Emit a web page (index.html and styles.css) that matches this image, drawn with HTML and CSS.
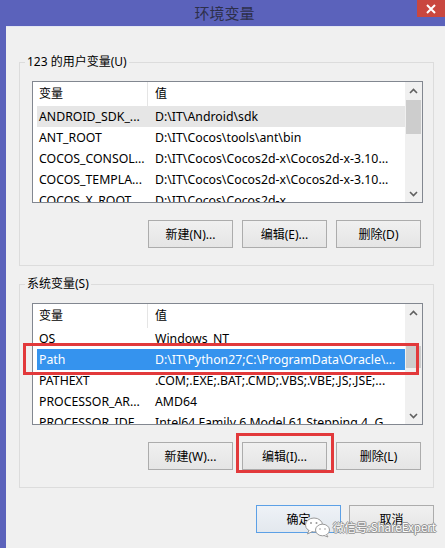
FILE: index.html
```html
<!DOCTYPE html>
<html lang="zh-CN">
<head>
<meta charset="utf-8">
<title>环境变量</title>
<link rel="stylesheet" href="styles.css">
</head>
<body>
<div class="page">
  <div class="titlebar">
    <span class="title">环境变量</span>
    <div class="close">
      <svg width="12" height="12" viewBox="0 0 12 12"><path d="M2 2 L10 10 M10 2 L2 10" stroke="#fff" stroke-width="2" fill="none"/></svg>
    </div>
  </div>
  <div class="frame">
    <div class="client">
      <fieldset class="group group-user">
        <legend>123 的用户变量(U)</legend>
        <div class="list">
          <div class="list-main">
            <div class="row header"><span class="c1">变量</span><span class="c2">值</span></div>
            <div class="row inactive"><span class="c1">ANDROID_SDK_...</span><span class="c2">D:\IT\Android\sdk</span></div>
            <div class="row"><span class="c1">ANT_ROOT</span><span class="c2">D:\IT\Cocos\tools\ant\bin</span></div>
            <div class="row"><span class="c1">COCOS_CONSOL...</span><span class="c2">D:\IT\Cocos\Cocos2d-x\Cocos2d-x-3.10...</span></div>
            <div class="row"><span class="c1">COCOS_TEMPLA...</span><span class="c2">D:\IT\Cocos\Cocos2d-x\Cocos2d-x-3.10...</span></div>
            <div class="row"><span class="c1">COCOS_X_ROOT</span><span class="c2">D:\IT\Cocos\Cocos2d-x</span></div>
          </div>
          <div class="scrollbar">
            <div class="arrow"><svg width="9" height="6" viewBox="0 0 9 6"><path d="M1 5 L4.5 1.5 L8 5" stroke="#606060" stroke-width="1.6" fill="none"/></svg></div>
            <div class="track"><div class="thumb thumb-user"></div></div>
            <div class="arrow"><svg width="9" height="6" viewBox="0 0 9 6"><path d="M1 1 L4.5 4.5 L8 1" stroke="#606060" stroke-width="1.6" fill="none"/></svg></div>
          </div>
        </div>
        <div class="buttons">
          <div class="btn">新建(N)...</div>
          <div class="btn">编辑(E)...</div>
          <div class="btn">删除(D)</div>
        </div>
      </fieldset>

      <fieldset class="group group-sys">
        <legend>系统变量(S)</legend>
        <div class="list">
          <div class="list-main">
            <div class="row header"><span class="c1">变量</span><span class="c2">值</span></div>
            <div class="row"><span class="c1">OS</span><span class="c2">Windows_NT</span></div>
            <div class="row selected"><span class="c1">Path</span><span class="c2">D:\IT\Python27;C:\ProgramData\Oracle\...</span></div>
            <div class="row"><span class="c1">PATHEXT</span><span class="c2">.COM;.EXE;.BAT;.CMD;.VBS;.VBE;.JS;.JSE;...</span></div>
            <div class="row"><span class="c1">PROCESSOR_AR...</span><span class="c2">AMD64</span></div>
            <div class="row"><span class="c1">PROCESSOR_IDE...</span><span class="c2">Intel64 Family 6 Model 61 Stepping 4, G...</span></div>
          </div>
          <div class="scrollbar">
            <div class="arrow"><svg width="9" height="6" viewBox="0 0 9 6"><path d="M1 5 L4.5 1.5 L8 5" stroke="#606060" stroke-width="1.6" fill="none"/></svg></div>
            <div class="track"><div class="thumb thumb-sys"></div></div>
            <div class="arrow"><svg width="9" height="6" viewBox="0 0 9 6"><path d="M1 1 L4.5 4.5 L8 1" stroke="#606060" stroke-width="1.6" fill="none"/></svg></div>
          </div>
        </div>
        <div class="buttons">
          <div class="btn">新建(W)...</div>
          <div class="btn">编辑(I)...</div>
          <div class="btn">删除(L)</div>
        </div>
      </fieldset>

      <div class="dialog-buttons">
        <div class="btn default">确定</div>
        <div class="btn">取消</div>
      </div>
    </div>
  </div>

  <div class="mark mark-path"></div>
  <div class="mark mark-edit"></div>

  <div class="watermark">
    <svg class="wx" width="28" height="22" viewBox="0 0 28 22">
      <ellipse cx="10" cy="9" rx="8.5" ry="7" fill="#fff" stroke="#9a9a9a" stroke-width="1"/>
      <path d="M5 14 L3.5 18 L8.5 15.5" fill="#fff" stroke="#9a9a9a" stroke-width="1"/>
      <ellipse cx="18.5" cy="14" rx="7" ry="5.8" fill="#fff" stroke="#9a9a9a" stroke-width="1"/>
      <path d="M22.5 18.5 L24 21 L20 19.5" fill="#fff" stroke="#9a9a9a" stroke-width="1"/>
      <circle cx="7" cy="7" r="1" fill="#9a9a9a"/>
      <circle cx="12.5" cy="7" r="1" fill="#9a9a9a"/>
      <circle cx="16" cy="13" r="0.8" fill="#9a9a9a"/>
      <circle cx="21" cy="13" r="0.8" fill="#9a9a9a"/>
    </svg>
    <span class="wx-text">微信号:ShareExpert</span>
  </div>
</div>
</body>
</html>
```

FILE: styles.css
```css
* { box-sizing: border-box; }

html, body {
  margin: 0;
  padding: 0;
  background: #5b62bb;
}

body {
  font-family: "Noto Sans", "Noto Sans CJK SC", sans-serif;
  font-size: 12px;
  color: #000;
}

.page {
  position: relative;
  width: 445px;
  height: 548px;
  overflow: hidden;
  display: flex;
  flex-direction: column;
}

.titlebar {
  position: relative;
  height: 26px;
  flex: none;
  background: #5b62bb;
  display: flex;
  align-items: center;
  justify-content: center;
}

.title {
  font-family: "Noto Sans CJK SC", sans-serif;
  font-size: 15px;
  color: #2d2f4a;
  line-height: 26px;
  padding-left: 4px;
}

.close {
  position: absolute;
  right: 0;
  top: 0;
  width: 28px;
  height: 17px;
  background: #c9473f;
  display: flex;
  align-items: center;
  justify-content: center;
}

.close svg { display: block; }

.frame {
  flex: 1;
  display: flex;
  padding-left: 6px;
  background: #5b62bb;
}

.client {
  flex: 1;
  background: #f0f0f0;
  border-top: 1px solid #e3e6f2;
  display: flex;
  flex-direction: column;
  padding: 0 12px 0 13px;
}

.group {
  margin: 0;
  min-width: 0;
  width: 415px;
  border: 1px solid #dcdcdc;
  padding: 11px 10px 17px 12px;
}

.group-user { margin-top: 27px; }
.group-sys { margin-top: 10px; }

.group legend {
  margin-left: -7px;
  padding: 0 2px;
  line-height: 16px;
  font-size: 12px;
  color: #000;
}

.list {
  height: 122px;
  border: 1px solid #828790;
  background: #fff;
  display: flex;
  overflow: hidden;
}

.list-main {
  flex: 1;
  min-width: 0;
  overflow: hidden;
  display: flex;
  flex-direction: column;
}

.row {
  flex: none;
  height: 21px;
  margin-left: 4px;
  display: grid;
  grid-template-columns: 111px 1fr;
  align-items: center;
  white-space: nowrap;
  font-size: 12.3px;
}

.row span {
  overflow: hidden;
  line-height: 21px;
}

.row .c1 { padding-left: 2px; }
.row .c2 { padding-left: 7px; }

.row.header {
  height: 24px;
  margin-left: 0;
  grid-template-columns: 115px 1fr;
  font-size: 12px;
}

.row.header span { line-height: 24px; height: 24px; }
.row.header .c1 { padding-left: 6px; border-right: 1px solid #e5e5e5; }

.row.inactive { background: #e6e6e6; }

.row.selected {
  background: #3593ee;
  color: #fff;
}

.scrollbar {
  flex: none;
  width: 17px;
  background: #f0f0f0;
  display: flex;
  flex-direction: column;
}

.arrow {
  flex: none;
  height: 17px;
  display: flex;
  align-items: center;
  justify-content: center;
}

.arrow svg { display: block; }

.track {
  flex: 1;
  display: flex;
  flex-direction: column;
}

.thumb {
  margin: 0 1px;
  background: #cdcdcd;
}

.thumb-user { margin-top: 1px; height: 34px; }
.thumb-sys { margin-top: 25px; height: 22px; }

.buttons {
  margin-top: 17px;
  display: flex;
  justify-content: flex-end;
  gap: 9px;
  padding-right: 2px;
}

.btn {
  width: 85px;
  height: 28px;
  border: 1px solid #acacac;
  background: linear-gradient(#f0f0f0, #e5e5e5);
  display: flex;
  align-items: center;
  justify-content: center;
  font-size: 12px;
  color: #000;
}

.btn.default {
  border-color: #5ca0e6;
  background: linear-gradient(#eef2f7, #e3e8ee);
}

.dialog-buttons {
  margin-top: 17px;
  display: flex;
  justify-content: flex-end;
  gap: 8px;
}

.mark {
  position: absolute;
  border: 3px solid #e2393b;
}

.mark-path { left: 23px; top: 343px; width: 396px; height: 32px; }
.mark-edit { left: 236px; top: 433px; width: 98px; height: 40px; }

.watermark {
  position: absolute;
  left: 304px;
  top: 516px;
  display: flex;
  align-items: center;
  gap: 1px;
}

.wx { display: block; }

.wx-text {
  font-family: "Noto Sans CJK SC", sans-serif;
  font-size: 11.5px;
  color: #fff;
  white-space: nowrap;
  text-shadow: 0 0 1px #777, 1px 0 0 #999, -1px 0 0 #999, 0 1px 0 #999, 0 -1px 0 #999;
}
```
